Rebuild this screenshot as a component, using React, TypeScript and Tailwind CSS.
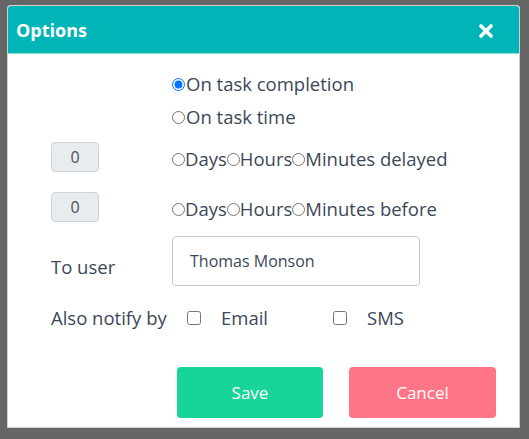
import React from "react";

const font = { fontFamily: '"Open Sans", "Noto Sans", sans-serif' };

export default function App() {
  return (
    <div
      className="w-[529px] h-[439px] bg-[#666666] pt-[5px] pl-[7px] overflow-hidden"
      style={font}
    >
      <div className="w-[513px] h-[423px] bg-white border border-[#d0d0d0] rounded-t-[3px] flex flex-col">
        <div className="h-[48px] bg-[#00b5b8] border-b border-[#7fe3c5] flex items-center justify-between pl-[8px] pr-[25px] rounded-t-[3px]">
          <span className="text-white font-bold text-[18px] mt-[2px]">Options</span>
          <svg width="16" height="14" viewBox="0 0 16 14" className="mt-[2px]">
            <path d="M3 2 L13 12 M13 2 L3 12" stroke="white" strokeWidth="3.6" strokeLinecap="round" />
          </svg>
        </div>
        <div className="flex flex-col pl-[43px] text-[#3b4858] text-[18.5px]">
          <div className="mt-[16px] h-[28px] flex items-center pl-[121px]">
            <input type="radio" name="x" defaultChecked className="m-0 h-[13px] w-[13px]" />
            <span className="ml-[1px]">On task completion</span>
          </div>
          <div className="mt-[5px] h-[28px] flex items-center pl-[121px]">
            <input type="radio" name="y" className="m-0 h-[13px] w-[13px]" />
            <span className="ml-[1px]">On task time</span>
          </div>
          <div className="mt-[11px] h-[30px] flex items-center">
            <div className="w-[48px] h-[30px] rounded-[4px] bg-[#e9ecef] border border-[#ced4da] flex items-center justify-center text-[16px] text-[#495057]">
              0
            </div>
            <div className="ml-[73px] flex items-center mt-[4px]">
              <input type="radio" name="a" className="m-0 h-[13px] w-[13px]" />
              <span>Days</span>
              <input type="radio" name="a" className="m-0 h-[13px] w-[13px]" />
              <span>Hours</span>
              <input type="radio" name="a" className="m-0 h-[13px] w-[13px]" />
              <span>Minutes delayed</span>
            </div>
          </div>
          <div className="mt-[20px] h-[30px] flex items-center">
            <div className="w-[48px] h-[30px] rounded-[4px] bg-[#e9ecef] border border-[#ced4da] flex items-center justify-center text-[16px] text-[#495057]">
              0
            </div>
            <div className="ml-[73px] flex items-center mt-[4px]">
              <input type="radio" name="b" className="m-0 h-[13px] w-[13px]" />
              <span>Days</span>
              <input type="radio" name="b" className="m-0 h-[13px] w-[13px]" />
              <span>Hours</span>
              <input type="radio" name="b" className="m-0 h-[13px] w-[13px]" />
              <span>Minutes before</span>
            </div>
          </div>
          <div className="mt-[14px] h-[50px] flex items-end">
            <span className="w-[121px] pb-[5px]">To user</span>
            <div className="w-[248px] h-[50px] rounded-[4px] border border-[#c5c9d0] flex items-center pl-[17px] text-[16px] text-[#3b4858]">
              Thomas Monson
            </div>
          </div>
          <div className="mt-[20px] h-[24px] flex items-center">
            <span className="w-[136px] whitespace-nowrap">Also notify by</span>
            <input type="checkbox" className="m-0 h-[14px] w-[14px]" />
            <span className="ml-[20px] w-[112px]">Email</span>
            <input type="checkbox" className="m-0 h-[14px] w-[14px]" />
            <span className="ml-[20px]">SMS</span>
          </div>
          <div className="mt-[37px] flex pl-[126px] gap-[26px]">
            <button className="w-[146px] h-[51px] rounded-[4px] bg-[#17d499] text-white text-[17px]">
              Save
            </button>
            <button className="w-[147px] h-[51px] rounded-[4px] bg-[#ff7588] text-white text-[17px]">
              Cancel
            </button>
          </div>
        </div>
      </div>
    </div>
  );
}
